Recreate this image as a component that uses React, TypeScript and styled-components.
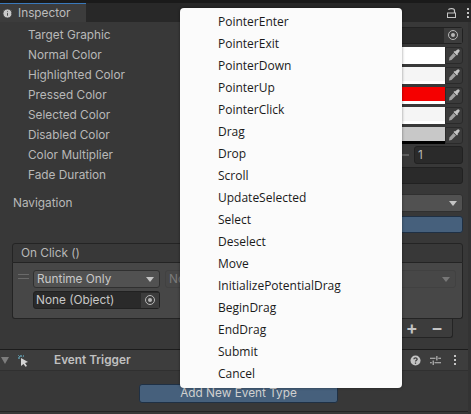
import { createGlobalStyle, styled } from "styled-components";
import { Info } from "lucide-react";

const GlobalStyle = createGlobalStyle`
  html, body {
    margin: 0;
    padding: 0;
    background: #383838;
  }
  body {
    width: 471px;
    height: 414px;
    overflow: hidden;
    font-family: Inter, "Noto Sans", sans-serif;
  }
`;

const Page = styled.div`
  position: relative;
  width: 471px;
  height: 414px;
  overflow: hidden;
  background: #383838;
  color: #b8b8b8;
  font-size: 11.8px;
`;

const TopStrip = styled.div`
  height: 3px;
  background: #1a1a1a;
`;

const TabBar = styled.div`
  display: flex;
  align-items: center;
  justify-content: space-between;
  height: 19px;
  background: #282828;
  padding-right: 2px;
`;

const Tab = styled.div`
  display: flex;
  align-items: center;
  gap: 5px;
  box-sizing: border-box;
  width: 86px;
  height: 19px;
  padding-left: 2px;
  background: #3c3c3c;
  border-top: 1px solid #3a79bb;
  color: #bdbdbd;
`;

const TabTools = styled.div`
  display: flex;
  align-items: center;
  gap: 11px;
`;

const Dots = styled.div`
  display: flex;
  flex-direction: column;
  gap: 2px;
  & > i {
    display: block;
    width: 2px;
    height: 2px;
    background: #c4c4c4;
  }
`;

const Scrollbar = styled.div`
  position: absolute;
  right: 0;
  top: 22px;
  bottom: 0;
  width: 3px;
  background: #333333;
`;

const Rows = styled.div`
  display: flex;
  flex-direction: column;
  padding: 3px 8px 0 28px;
`;

const Row = styled.div`
  display: flex;
  align-items: center;
  justify-content: space-between;
  height: 20px;
`;

const NavRow = styled(Row)`
  margin-top: 8px;
  margin-left: -15px;
`;

const Label = styled.span`
  line-height: 20px;
`;

const ColorField = styled.div`
  display: flex;
  align-items: stretch;
  width: 279px;
  height: 17px;
`;

const Swatch = styled.div<{ $color: string; $bar: string }>`
  flex: 1;
  background: ${(p) => p.$color};
  border-bottom: 3px solid ${(p) => p.$bar};
`;

const PickButton = styled.div`
  display: flex;
  align-items: center;
  justify-content: center;
  box-sizing: border-box;
  width: 18px;
  background: #3a3a3a;
  border: 1px solid #2a2a2a;
  border-radius: 0 3px 3px 0;
`;

const ObjectField = styled.div`
  display: flex;
  align-items: center;
  justify-content: flex-end;
  box-sizing: border-box;
  width: 279px;
  height: 17px;
  background: #2a2a2a;
  border: 1px solid #212121;
  border-radius: 3px;
`;

const TargetDot = styled.div`
  display: flex;
  align-items: center;
  justify-content: center;
  width: 18px;
  height: 15px;
  background: #3c3c3c;
`;

const Target = styled.div`
  box-sizing: border-box;
  width: 10px;
  height: 10px;
  border: 1px solid #b8b8b8;
  border-radius: 50%;
  display: flex;
  align-items: center;
  justify-content: center;
  &::after {
    content: "";
    width: 4px;
    height: 4px;
    border-radius: 50%;
    background: #b8b8b8;
  }
`;

const SliderEnd = styled.div`
  display: flex;
  align-items: center;
  gap: 5px;
`;

const SliderTail = styled.div`
  width: 8px;
  height: 2px;
  background: #5e5e5e;
`;

const NumberField = styled.div`
  box-sizing: border-box;
  width: 49px;
  height: 18px;
  padding-left: 3px;
  background: #2a2a2a;
  border: 1px solid #212121;
  border-radius: 3px;
  line-height: 16px;
`;

const PlainField = styled.div`
  box-sizing: border-box;
  width: 279px;
  height: 17px;
  background: #2a2a2a;
  border: 1px solid #212121;
  border-radius: 3px;
`;

const Select = styled.div<{ $width: number; $dim?: boolean }>`
  display: flex;
  align-items: center;
  justify-content: space-between;
  box-sizing: border-box;
  width: ${(p) => p.$width}px;
  height: 18px;
  padding: 0 5px 0 3px;
  background: ${(p) => (p.$dim ? "#474747" : "#515151")};
  border: 1px solid ${(p) => (p.$dim ? "#414141" : "#303030")};
  border-radius: 3px;
  color: ${(p) => (p.$dim ? "#7a7a7a" : "#c8c8c8")};
  white-space: nowrap;
`;

const Caret = styled.div<{ $dim?: boolean }>`
  width: 0;
  height: 0;
  border-left: 4px solid transparent;
  border-right: 4px solid transparent;
  border-top: 5px solid ${(p) => (p.$dim ? "#777" : "#c4c4c4")};
`;

const BlueBar = styled.div`
  box-sizing: border-box;
  height: 17px;
  margin: 3px 8px 0 184px;
  background: #46607c;
  border: 1px solid #1f3044;
  border-radius: 3px;
`;

const EventPanel = styled.div`
  margin: 10px 8px 0 12px;
`;

const EventHeader = styled.div`
  box-sizing: border-box;
  height: 20px;
  padding-left: 8px;
  background: #383838;
  border: 1px solid #242424;
  border-radius: 3px 3px 0 0;
  line-height: 18px;
`;

const EventBody = styled.div`
  box-sizing: border-box;
  display: flex;
  gap: 4px;
  height: 56px;
  padding: 7px 6px 0 5px;
  background: #474747;
  border: 1px solid #242424;
  border-top: none;
  border-radius: 0 0 3px 3px;
`;

const Grip = styled.div`
  box-sizing: border-box;
  width: 11px;
  height: 5px;
  margin-top: 4px;
  border-top: 1px solid #6a6a6a;
  border-bottom: 1px solid #6a6a6a;
`;

const EventColumn = styled.div`
  display: flex;
  flex-direction: column;
  gap: 3px;
`;

const EventRow = styled.div`
  display: flex;
  gap: 5px;
`;

const ObjectPicker = styled.div`
  display: flex;
  align-items: center;
  justify-content: space-between;
  box-sizing: border-box;
  width: 127px;
  height: 18px;
  padding-left: 2px;
  background: #2a2a2a;
  border: 1px solid #212121;
  border-radius: 3px;
  color: #c8c8c8;
`;

const Footer = styled.div`
  display: flex;
  align-items: center;
  justify-content: flex-end;
  gap: 13px;
  box-sizing: border-box;
  width: 120px;
  height: 19px;
  margin: 0 10px 0 auto;
  padding-right: 9px;
  background: #3c3c3c;
  border: 1px solid #242424;
  border-top: none;
  border-radius: 0 0 3px 3px;
  color: #c4c4c4;
  font-size: 18px;
  font-weight: 600;
  line-height: 16px;
`;

const ComponentHeader = styled.div`
  display: flex;
  align-items: center;
  box-sizing: border-box;
  height: 22px;
  margin-top: 11px;
  padding-right: 15px;
  background: #3d3d3d;
  border-top: 1px solid #1c1c1c;
  border-bottom: 1px solid #303030;
`;

const FoldArrow = styled.div`
  width: 0;
  height: 0;
  margin: 0 8px 0 1px;
  border-left: 4px solid transparent;
  border-right: 4px solid transparent;
  border-top: 7px solid #7d7d7d;
`;

const ComponentTitle = styled.b`
  margin-left: 25px;
  flex: 1;
  font-weight: 600;
  color: #c0c0c0;
`;

const HeaderTools = styled.div`
  display: flex;
  align-items: center;
  gap: 9px;
  & > div {
    margin-left: 4px;
  }
`;

const AddArea = styled.div`
  box-sizing: border-box;
  height: 41px;
  padding: 13px 0 0 139px;
  border-bottom: 1px solid #232323;
`;

const AddButton = styled.div`
  box-sizing: border-box;
  width: 199px;
  height: 19px;
  background: #46607c;
  border: 1px solid #1f3044;
  border-radius: 3px;
  color: #d0d0d0;
  text-align: center;
  line-height: 17px;
`;

const Menu = styled.ul`
  position: absolute;
  left: 180px;
  top: 8px;
  box-sizing: border-box;
  width: 222px;
  height: 380px;
  margin: 0;
  padding: 3px 0 0 38px;
  list-style: none;
  background: #fbfbfb;
  border-radius: 4px;
  box-shadow: 0 0 3px rgba(0, 0, 0, 0.45);
  color: #1a1a1a;
  font-family: "Open Sans", "Noto Sans", sans-serif;
  font-size: 12px;
`;

const MenuItem = styled.li`
  height: 22px;
  line-height: 22px;
`;

const colorRows = [
  { label: "Normal Color", color: "#ffffff", bar: "#ffffff" },
  { label: "Highlighted Color", color: "#f5f5f5", bar: "#ffffff" },
  { label: "Pressed Color", color: "#f50000", bar: "#ffffff" },
  { label: "Selected Color", color: "#f5f5f5", bar: "#ffffff" },
  { label: "Disabled Color", color: "#c8c8c8", bar: "#000000" },
];

const eventTypes = [
  "PointerEnter",
  "PointerExit",
  "PointerDown",
  "PointerUp",
  "PointerClick",
  "Drag",
  "Drop",
  "Scroll",
  "UpdateSelected",
  "Select",
  "Deselect",
  "Move",
  "InitializePotentialDrag",
  "BeginDrag",
  "EndDrag",
  "Submit",
  "Cancel",
];

const Kebab = () => (
  <Dots>
    <i />
    <i />
    <i />
  </Dots>
);

const EyeDropper = () => (
  <svg width="12" height="12" viewBox="0 0 12 12">
    <path d="M7 2.500L9.200.800a1.300 1.300 0 0 1 2 2L9.500 5 10 5.500 9 6.500 5.500 3 6.500 2z" fill="#c4c4c4" />
    <path d="M5.500 4L8 6.500 3.500 11 1 11.500 1.500 8.500z" fill="#c4c4c4" opacity="0.75" />
  </svg>
);

const LockIcon = () => (
  <svg width="9" height="10" viewBox="0 0 9 10">
    <path d="M1.500 1.800C2 .200 7.500 .200 7.500 2.500V5" stroke="#c4c4c4" strokeWidth="1.200" fill="none" />
    <rect x="0.500" y="5" width="8" height="4.500" fill="none" stroke="#c4c4c4" />
  </svg>
);

const App = () => {
  return (
    <Page>
      <GlobalStyle />
      <TopStrip />
      <TabBar>
        <Tab>
          <Info size={11} fill="#c8c8c8" color="#3c3c3c" />
          Inspector
        </Tab>
        <TabTools>
          <LockIcon />
          <Kebab />
        </TabTools>
      </TabBar>

      <Rows>
        <Row>
          <Label>Target Graphic</Label>
          <ObjectField>
            <TargetDot>
              <Target />
            </TargetDot>
          </ObjectField>
        </Row>
        {colorRows.map((row) => (
          <Row key={row.label}>
            <Label>{row.label}</Label>
            <ColorField>
              <Swatch $color={row.color} $bar={row.bar} />
              <PickButton>
                <EyeDropper />
              </PickButton>
            </ColorField>
          </Row>
        ))}
        <Row>
          <Label>Color Multiplier</Label>
          <SliderEnd>
            <SliderTail />
            <NumberField>1</NumberField>
          </SliderEnd>
        </Row>
        <Row>
          <Label>Fade Duration</Label>
          <PlainField />
        </Row>
        <NavRow>
          <Label>Navigation</Label>
          <Select $width={279}>
            <span />
            <Caret />
          </Select>
        </NavRow>
      </Rows>
      <BlueBar />

      <EventPanel>
        <EventHeader>On Click ()</EventHeader>
        <EventBody>
          <Grip />
          <EventColumn>
            <EventRow>
              <Select $width={127}>
                Runtime Only
                <Caret />
              </Select>
              <Select $width={291} $dim>
                No Function
                <Caret $dim />
              </Select>
            </EventRow>
            <ObjectPicker>
              None (Object)
              <TargetDot>
                <Target />
              </TargetDot>
            </ObjectPicker>
          </EventColumn>
        </EventBody>
        <Footer>
          <span>+</span>
          <span>−</span>
        </Footer>
      </EventPanel>

      <ComponentHeader>
        <FoldArrow />
        <svg width="12" height="13" viewBox="0 0 12 13">
          <path d="M4 1v2M1 4h2M1.500 1.500l1.200 1.200M7 1.500L5.800 2.700" stroke="#6fc6e0" strokeWidth="1" fill="none" />
          <path d="M4 4l7 4-3 1 2 3-1.500.8L6.500 10 4 12z" fill="#d4d4d4" />
        </svg>
        <ComponentTitle>Event Trigger</ComponentTitle>
        <HeaderTools>
          <svg width="11" height="11" viewBox="0 0 12 12">
            <circle cx="6" cy="6" r="5.500" fill="#c4c4c4" />
            <path d="M4.200 4.700C4.300 2.600 7.800 2.600 7.800 4.500 7.800 5.800 6 5.700 6 7.200" stroke="#3d3d3d" strokeWidth="1.400" fill="none" />
            <rect x="5.300" y="8.200" width="1.400" height="1.400" fill="#3d3d3d" />
          </svg>
          <svg width="11" height="11" viewBox="0 0 12 12">
            <path d="M0 3.500h6M9 3.500h3M0 8.500h2M5 8.500h7M7.500 1v5M3.500 6v5" stroke="#c4c4c4" strokeWidth="1.200" fill="none" />
          </svg>
          <Kebab />
        </HeaderTools>
      </ComponentHeader>
      <AddArea>
        <AddButton>Add New Event Type</AddButton>
      </AddArea>

      <Scrollbar />

      <Menu>
        {eventTypes.map((name) => (
          <MenuItem key={name}>{name}</MenuItem>
        ))}
      </Menu>
    </Page>
  );
};

export default App;
